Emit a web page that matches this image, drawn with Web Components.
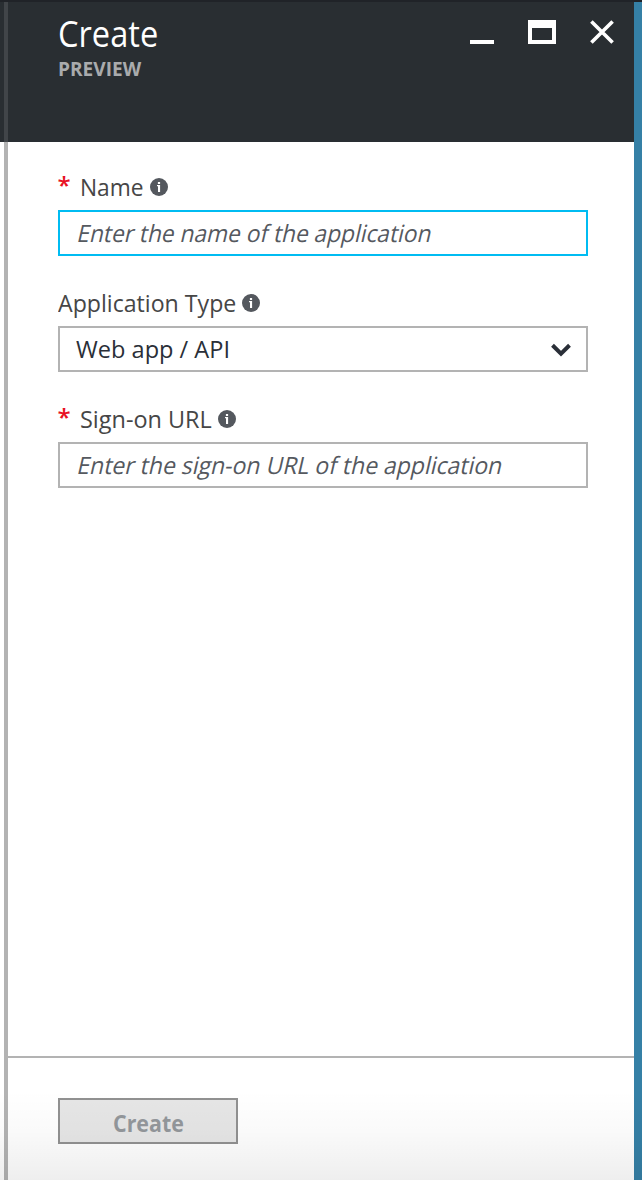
<!DOCTYPE html>
<html lang="en">
<head>
<meta charset="utf-8">
<title>Create</title>
<style>
html,body{margin:0;height:100%;background:#fff}
body{font-family:"Open Sans","Noto Sans",sans-serif;overflow:hidden}
</style>
</head>
<body>
<app-blade>
  <blade-header slot="header"><fit-text slot="title" width="100.5">Create</fit-text><fit-text slot="subtitle" width="83">PREVIEW</fit-text></blade-header>
  <form-field required>
    <fit-text slot="label" width="64">Name</fit-text>
    <text-box focused><fit-text width="354">Enter the name of the application</fit-text></text-box>
  </form-field>
  <form-field>
    <fit-text slot="label" width="178">Application Type</fit-text>
    <select-box><fit-text width="154.5">Web app / API</fit-text></select-box>
  </form-field>
  <form-field required>
    <fit-text slot="label" width="132">Sign-on URL</fit-text>
    <text-box><fit-text width="425">Enter the sign-on URL of the application</fit-text></text-box>
  </form-field>
  <action-button slot="footer"><fit-text width="71">Create</fit-text></action-button>
</app-blade>
<script>
const define = (name, html, setup) => customElements.define(name, class extends HTMLElement {
  connectedCallback() {
    if (this.shadowRoot) return;
    const t = document.createElement('template');
    t.innerHTML = html;
    this.attachShadow({mode: 'open'}).append(t.content.cloneNode(true));
    if (setup) setup(this, this.shadowRoot);
  }
});

define('app-blade', `<style>
:host{display:grid;grid-template-columns:4px 4px 626px 8px;grid-template-rows:2px 140px 914px 124px;position:relative;width:642px;height:1180px}
.top{grid-area:1/1/2/5;background:#202328}
.gutter{grid-area:2/1/3/2;background:#292e32}
.rail-dark{grid-area:2/2/3/3;background:#414549}
.rail{grid-area:3/2/5/3;background:#b3b3b3}
.edge{grid-area:2/4/5/5;background:#3580a6}
header{grid-area:2/3/3/4;background:#292e32}
main{grid-area:3/3/4/4;padding:30px 46px 0 50px;display:flex;flex-direction:column;gap:32px}
footer{grid-area:4/3/5/4;border-top:2px solid #b3b3b3;padding:40px 50px 0}
.shade{position:absolute;left:0;right:0;bottom:0;height:90px;background:linear-gradient(rgba(0,0,0,0),rgba(0,0,0,.018) 45%,rgba(0,0,0,.065));pointer-events:none}
</style>
<div class="top"></div><div class="gutter"></div><div class="rail-dark"></div><div class="rail"></div><div class="edge"></div>
<header><slot name="header"></slot></header>
<main><slot></slot></main>
<footer><slot name="footer"></slot></footer>
<div class="shade"></div>`);

define('blade-header', `<style>
:host{display:flex;justify-content:space-between;padding:9px 20px 0 50px}
.text{display:flex;flex-direction:column}
.title{height:45px;line-height:45px;font-size:36px;color:#fff}
.sub{height:26px;line-height:26px;font-size:20px;font-weight:700;color:#a9abad}
.controls{display:flex;gap:34px;padding-top:8px}
svg{display:block;fill:#fff}
</style>
<div class="text"><div class="title"><slot name="title"></slot></div><div class="sub"><slot name="subtitle"></slot></div></div>
<div class="controls">
<svg width="24" height="26"><path d="M0 21h24v4H0z"/></svg>
<svg width="28" height="26"><path fill-rule="evenodd" d="M0 1h28v24H0zM4 9v12h20V9z"/></svg>
<svg width="24" height="26"><path d="M1.4 2.4 22.6 23.6M22.6 2.4 1.4 23.6" stroke="#fff" stroke-width="3.6"/></svg>
</div>`);

define('form-field', `<style>
:host{display:block;height:84px}
.label{display:flex;height:38px;line-height:31px;font-size:23.8px;color:#464646}
.star{display:none;width:22.5px;margin-left:-.5px;color:#e81123;font-size:24px;font-weight:600;line-height:26px}
:host([required]) .star{display:block}
svg{display:block;margin:6px 0 0 6px}
</style>
<div class="label"><span class="star">*</span><slot name="label"></slot>
<svg width="18" height="18"><circle cx="9" cy="9" r="9" fill="#54585e"/><path fill="#fff" d="M7.9 4h2.2v2H7.9zM7 7h3.1v7H8V8.3H7z"/></svg></div>
<slot></slot>`);

define('text-box', `<style>
:host{display:flex;box-sizing:border-box;height:46px;border:2px solid #b3b3b3;padding-left:16px;line-height:43px;font-size:23.8px;color:#55595f;--slant:-13deg}
:host([focused]){border-color:#00bcf2}
</style><slot></slot>`);

define('select-box', `<style>
:host{display:flex;justify-content:space-between;box-sizing:border-box;height:46px;border:2px solid #b3b3b3;padding:0 15px 0 16px;line-height:43px;font-size:23.8px;color:#2a2f38}
svg{display:block;margin-top:15px}
</style><slot></slot>
<svg width="20" height="14"><path d="M1.5 2.3 10 10.6 18.5 2.3" fill="none" stroke="#2a2f38" stroke-width="4"/></svg>`);

define('action-button', `<style>
:host{display:flex;justify-content:center;box-sizing:border-box;width:180px;height:46px;border:2px solid #919191;background:#e6e6e6;line-height:46px;font-size:23.8px;font-weight:700;color:#93979b}
</style><slot></slot>`);

/* Condenses a single line of text to the advance width it is given; --slant leans it from the baseline. */
define('fit-text', `<style>
:host{display:block;white-space:nowrap}
span{display:inline-block;transform-origin:0 70%}
</style><span><slot></slot></span>`, (host, root) => {
  const w = +host.getAttribute('width');
  host.style.width = w + 'px';
  requestAnimationFrame(() => {
    const s = root.querySelector('span');
    s.style.transform = `skewX(var(--slant, 0deg)) scaleX(${w / s.offsetWidth})`;
  });
});
</script>
</body>
</html>
